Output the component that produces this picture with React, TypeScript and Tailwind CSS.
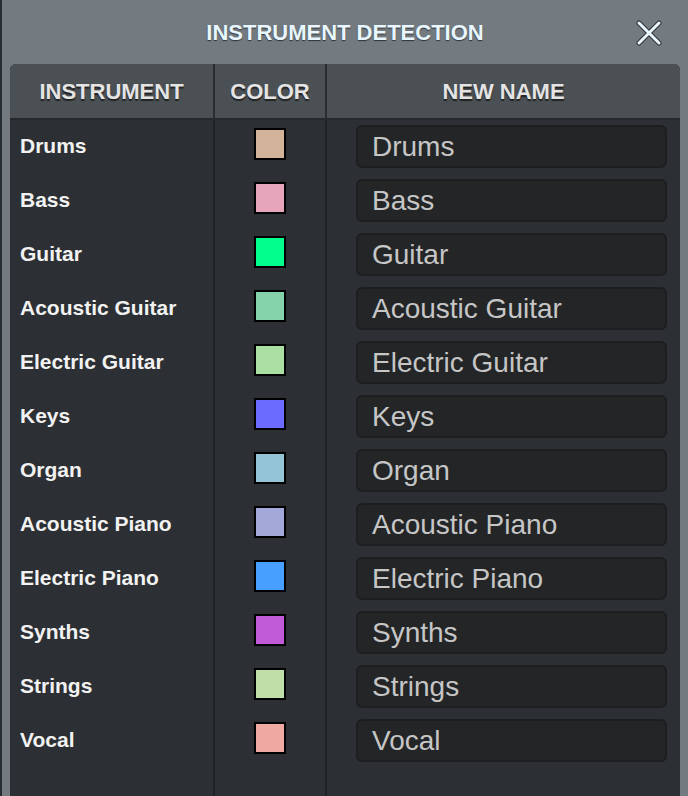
const rows: [string, string][] = [
  ['Drums', '#d4b39b'],
  ['Bass', '#e6a5bb'],
  ['Guitar', '#00ff8c'],
  ['Acoustic Guitar', '#85d3ab'],
  ['Electric Guitar', '#abdea3'],
  ['Keys', '#6b6bff'],
  ['Organ', '#93c5d6'],
  ['Acoustic Piano', '#a4a8d8'],
  ['Electric Piano', '#47a0ff'],
  ['Synths', '#c15ad6'],
  ['Strings', '#c0dfa8'],
  ['Vocal', '#f0a8a2'],
]

export default function App() {
  return (
    <div className="w-[688px] h-[796px] overflow-hidden bg-[#737a80] border-l-2 border-[#2a2d30] flex flex-col" style={{ fontFamily: '"Liberation Sans", Arial, sans-serif' }}>
      <div className="relative h-[64px] flex items-center justify-center">
        <span className="text-[22px] font-bold text-[#e8f7ff]" style={{ textShadow: '0 1px 1px #333' }}>INSTRUMENT DETECTION</span>
        <svg className="absolute right-[26px] top-[20px]" width="26" height="26" viewBox="0 0 26 26">
          <path d="M3 3L23 23M23 3L3 23" stroke="#333" strokeWidth="5" strokeLinecap="round" />
          <path d="M3 3L23 23M23 3L3 23" stroke="#e8f7ff" strokeWidth="3" strokeLinecap="round" />
        </svg>
      </div>
      <div className="ml-[8px] mr-[8px] flex-1 rounded-t-md bg-[#2c2f33] overflow-hidden flex flex-col">
        <div className="flex h-[56px] bg-[#4b5054] border-b-2 border-[#26292c] text-[22px] font-bold text-[#e4e4e4]" style={{ textShadow: '0 2px 1px #222' }}>
          <div className="w-[205px] flex items-center justify-center border-r-2 border-[#2a2d30]">INSTRUMENT</div>
          <div className="w-[112px] flex items-center justify-center border-r-2 border-[#2a2d30]">COLOR</div>
          <div className="flex-1 flex items-center justify-center">NEW NAME</div>
        </div>
        <div className="flex flex-1">
          <div className="w-[205px] border-r-2 border-[#202326] flex flex-col">
            {rows.map(([n]) => (
              <div key={n} className="h-[54px] flex items-center pl-[10px] pb-[3px] text-[21px] font-bold text-[#f2f2f2]">{n}</div>
            ))}
          </div>
          <div className="w-[112px] border-r-2 border-[#202326] flex flex-col">
            {rows.map(([n, c]) => (
              <div key={n} className="h-[54px] flex items-start justify-center pt-[8px]">
                <div className="w-[32px] h-[32px] border-2 border-black" style={{ background: c }} />
              </div>
            ))}
          </div>
          <div className="flex-1 flex flex-col pl-[29px] pr-[13px]">
            {rows.map(([n]) => (
              <div key={n} className="h-[54px] pt-[5px]">
                <div className="h-[43px] rounded-md bg-[#232527] border-2 border-[#1c1e20] flex items-center pl-[14px] text-[28px] text-[#c6c6c6]">{n}</div>
              </div>
            ))}
          </div>
        </div>
      </div>
    </div>
  )
}
